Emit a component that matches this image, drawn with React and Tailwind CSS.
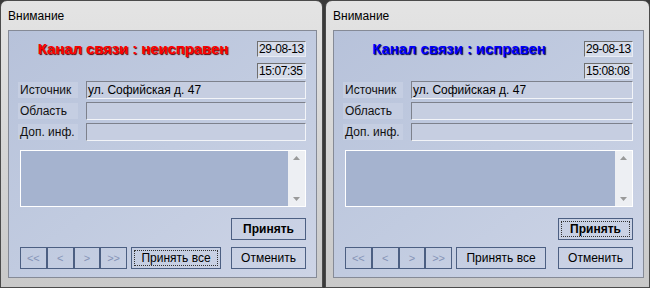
import React from "react";

const font = { fontFamily: '"Liberation Sans", Arial, sans-serif' };

function Sunken({ children, className = "" }) {
  return (
    <div
      className={
        "h-[18px] border border-t-[#7d818c] border-l-[#7d818c] border-b-[#f2f4f8] border-r-[#f2f4f8] bg-[#c6cee1] text-[12px] leading-[16px] pl-[1px] text-black whitespace-nowrap " +
        className
      }
    >
      {children}
    </div>
  );
}

function Row({ label, value }) {
  return (
    <div className="flex items-center h-[18px]">
      <div className="ml-[9px] w-[60px] h-[16px] bg-[#c5cee2] text-[12px] leading-[16px] text-[#111] pl-[2px] whitespace-nowrap">
        {label}
      </div>
      <Sunken className="ml-[8px] flex-1">{value}</Sunken>
    </div>
  );
}

function Btn({ children, className = "", focus = false, bold = false }) {
  return (
    <div
      className={
        "h-[22px] border border-[#4c5f82] flex items-center justify-center p-[2px] " +
        className
      }
    >
      <div
        className={
          "w-full h-full flex items-center justify-center text-[12px] text-black whitespace-nowrap " +
          (bold ? "font-bold " : "") +
          (focus ? "border border-dotted border-[#333]" : "border border-transparent")
        }
      >
        {children}
      </div>
    </div>
  );
}

function DateBox({ children }) {
  return (
    <div className="h-[16px] border border-[#6f6f6f] border-b-[#e8ecf4] border-r-[#e8ecf4] bg-[#d6dcea] text-[12px] leading-[14px] pl-[1px] text-black whitespace-nowrap overflow-hidden tracking-[-0.4px]">
      {children}
    </div>
  );
}

function Window({ title, status, color, shadow, date, time, focusAll, focusAccept, width }) {
  return (
    <div
      className={
        "h-[288px] rounded-t-[7px] border border-[#4b4b4b] bg-gradient-to-b from-[#e4e4e4] via-[#d6d6d6] to-[#c9c9c9] flex flex-col " +
        width
      }
      style={font}
    >
      <div className="h-[29px] pl-[7px] flex items-center text-[12px] text-black">{title}</div>
      <div className="ml-[7px] mr-[5px] h-[248px] border border-[#858a96] bg-gradient-to-br from-[#b7c2da] via-[#c1cbe0] to-[#cdd4e6] flex flex-col pr-[10px]">
        <div className="flex mt-[10px]">
          <div className="flex-1 flex justify-center">
            <span
              className="text-[15px] font-bold leading-[15px] tracking-[-0.1px]"
              style={{ color, textShadow: `1px 1px 1px ${shadow}` }}
            >
              {status}
            </span>
          </div>
          <div className="w-[49px] flex flex-col gap-[6px]">
            <DateBox>{date}</DateBox>
            <DateBox>{time}</DateBox>
          </div>
        </div>
        <div className="flex flex-col gap-[3px] mt-[2px]">
          <Row label="Источник" value="ул. Софийская д. 47" />
          <Row label="Область" value="" />
          <Row label="Доп. инф." value="" />
        </div>
        <div className="ml-[11px] mt-[9px] h-[57px] border border-white bg-[#a5b3cf] flex justify-end">
          <div className="w-[17px] h-full bg-[#edeff3] flex flex-col items-center justify-between py-[5px]">
            <svg width="7" height="4" viewBox="0 0 7 4">
              <path d="M0 4 L3.5 0 L7 4 Z" fill="#9a9a9a" />
            </svg>
            <svg width="7" height="4" viewBox="0 0 7 4">
              <path d="M0 0 L7 0 L3.5 4 Z" fill="#9a9a9a" />
            </svg>
          </div>
        </div>
        <div className="flex justify-end mt-[11px]">
          <Btn className="w-[75px]" bold focus={focusAccept}>Принять</Btn>
        </div>
        <div className="flex mt-[7px] ml-[11px]">
          <div className="flex h-[22px] w-[107px] border border-[#4c5f82]">
            {["<<", "<", ">", ">>"].map((s, i) => (
              <div
                key={i}
                className={
                  "flex-1 flex items-center justify-center text-[11px] text-[#8593b6] " +
                  (i < 3 ? "border-r-2 border-[#4c5f82]" : "")
                }
              >
                {s}
              </div>
            ))}
          </div>
          <Btn className="w-[90px] ml-[4px]" focus={focusAll}>Принять все</Btn>
          <div className="flex-1" />
          <Btn className="w-[75px]">Отменить</Btn>
        </div>
      </div>
    </div>
  );
}

export default function App() {
  return (
    <div className="w-[650px] h-[288px] bg-[#3a3a3a] flex overflow-hidden">
      <Window
        width="w-[323px]"
        title="Внимание"
        status="Канал связи : неисправен"
        color="#ff0000"
        shadow="#5a0000"
        date="29-08-13"
        time="15:07:35"
        focusAll
      />
      <div className="w-[2px]" />
      <Window
        width="w-[325px]"
        title="Внимание"
        status="Канал связи : исправен"
        color="#0000ff"
        shadow="#00003a"
        date="29-08-13"
        time="15:08:08"
        focusAccept
      />
    </div>
  );
}
